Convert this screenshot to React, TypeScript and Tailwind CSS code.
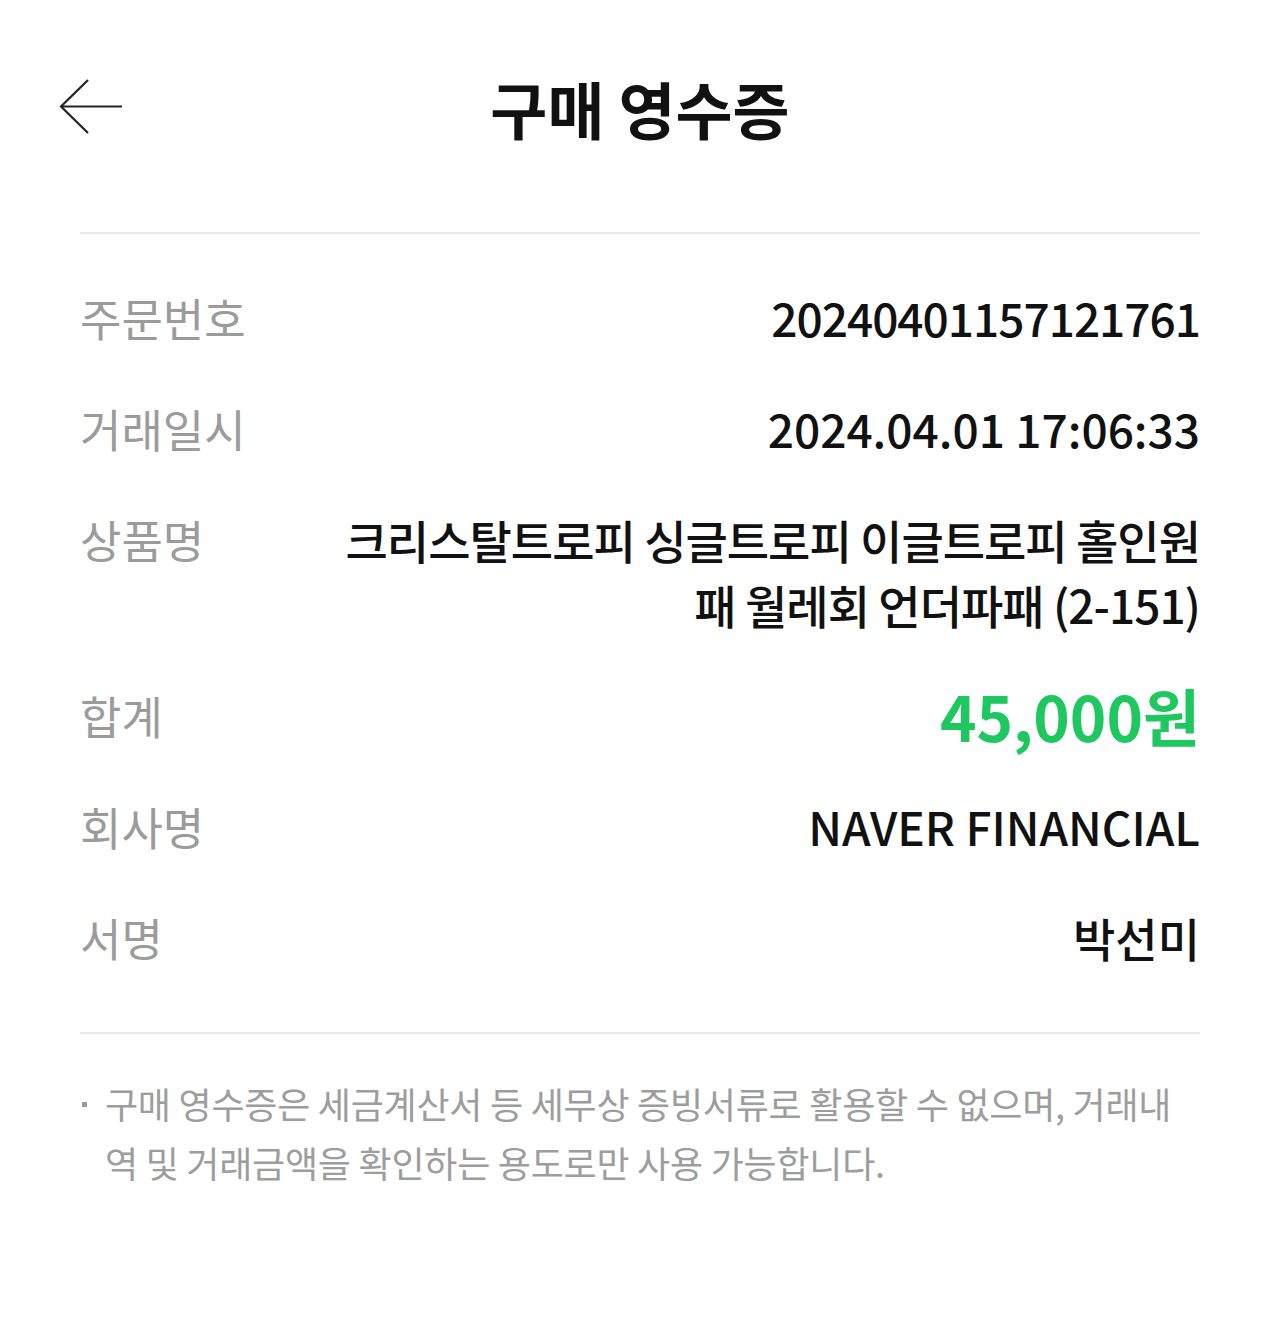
const rows: { label: string; value: React.ReactNode; tone?: "price"; tight?: boolean }[] = [
  { label: "주문번호", value: "20240401157121761", tight: true },
  { label: "거래일시", value: "2024.04.01 17:06:33" },
  {
    label: "상품명",
    value: (
      <>
        크리스탈트로피 싱글트로피 이글트로피 홀인원
        <br />패 월레회 언더파패 (2-151)
      </>
    ),
    tight: true,
  },
  { label: "합계", value: "45,000원", tone: "price" },
  { label: "회사명", value: "NAVER FINANCIAL" },
  { label: "서명", value: "박선미" },
];

const BackArrow = () => (
  <svg width="66" height="56" viewBox="0 0 66 56" fill="none" className="text-[#222]">
    <path d="M64 27.5H3" stroke="currentColor" strokeWidth="2.2" />
    <path d="M30 1L3 27.5L30 54" stroke="currentColor" strokeWidth="2.2" />
  </svg>
);

export default function App() {
  return (
    <div
      className="w-[1280px] min-h-[1335px] bg-white"
      style={{ fontFamily: '"Noto Sans CJK KR", "Noto Sans", sans-serif' }}
    >
      <header className="relative flex h-[232px] items-start justify-center pt-[68px]">
        <button className="absolute left-[58px] top-[79px]">
          <BackArrow />
        </button>
        <h1 className="text-[62px] font-bold leading-[80px] text-[#111]">구매 영수증</h1>
      </header>

      <div className="mx-20">
        <div className="h-[2px] bg-[#e8e8e8]" />

        <dl className="flex flex-col gap-[46px] pt-[51px] pb-[62px]">
          {rows.map((row) => (
            <div key={row.label} className="flex items-start justify-between gap-10">
              <dt className="shrink-0 text-[45px] leading-[65px] text-[#9b9b9b]">
                {row.label}
              </dt>
              {row.tone === "price" ? (
                <dd className="text-right text-[62px] font-bold leading-[65px] text-[#1ec75f]">
                  {row.value}
                </dd>
              ) : (
                <dd
                  className={
                    row.tight
                      ? "text-right text-[46px] font-medium leading-[65px] tracking-[-1px] text-[#111]"
                      : "text-right text-[46px] font-medium leading-[65px] text-[#111]"
                  }
                >
                  {row.value}
                </dd>
              )}
            </div>
          ))}
        </dl>

        <div className="h-[2px] bg-[#e8e8e8]" />

        <div className="flex gap-[18px] pt-[40px] pl-[2px]">
          <span className="mt-[28px] h-[5px] w-[5px] shrink-0 bg-[#9b9b9b]" />
          <p className="text-[36px] leading-[59px] tracking-[-0.25px] text-[#9d9d9d]">
            구매 영수증은 세금계산서 등 세무상 증빙서류로 활용할 수 없으며, 거래내
            <br />역 및 거래금액을 확인하는 용도로만 사용 가능합니다.
          </p>
        </div>
      </div>
    </div>
  );
}
